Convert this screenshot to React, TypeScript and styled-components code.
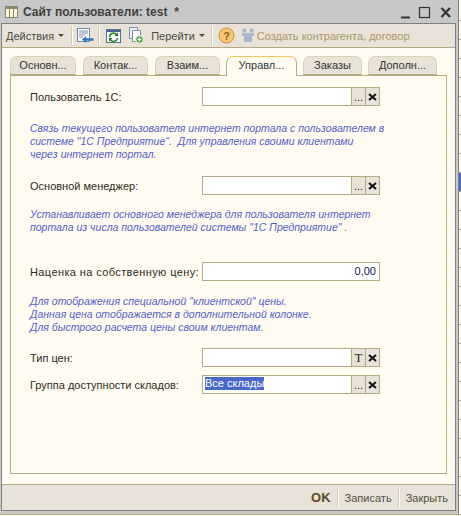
import React from 'react';
import styled, { createGlobalStyle } from 'styled-components';

const colors = {
  paper: '#fffbf0',
  chrome: '#e8e2d8',
  tan: '#b5ab82',
  frame: '#c8c8c8',
  edge: '#7f7f7f',
  note: '#5560c6',
  ink: '#3c3c3c',
  selection: '#4a68c8',
};

const GlobalStyle = createGlobalStyle`
  html, body {
    margin: 0;
    padding: 0;
    background: ${colors.paper};
  }
  body {
    font-family: "Liberation Sans", Arial, sans-serif;
    font-size: 11px;
  }
`;

const Page = styled.div`
  width: 461px;
  height: 516px;
  overflow: hidden;
  display: flex;
  flex-direction: column;
`;

const TopRow = styled.div`
  display: flex;
  height: 514px;
`;

const BottomStrip = styled.div`
  height: 2px;
  border-top: 1px solid ${colors.tan};
  background: ${colors.paper};
`;

const Frame = styled.div`
  width: 459px;
  box-sizing: border-box;
  background: ${colors.frame};
  padding: 0 2px 3px 1px;
  display: flex;
  flex-direction: column;
  border-right: 1px solid ${colors.edge};
`;

const TitleBar = styled.div`
  height: 23px;
  flex-shrink: 0;
  display: flex;
  align-items: center;
  padding-left: 4px;
  gap: 5px;
`;

const TitleText = styled.span`
  font-size: 12px;
  font-weight: bold;
  color: #404040;
  white-space: pre;
  flex: 1;
`;

const WindowButtons = styled.div`
  display: flex;
  align-items: center;
  margin-right: 5px;
`;

const Inner = styled.div`
  flex: 1;
  min-height: 0;
  display: flex;
  flex-direction: column;
  background: ${colors.paper};
  border: 1px solid ${colors.edge};
`;

const Toolbar = styled.div`
  height: 23px;
  flex-shrink: 0;
  background: ${colors.chrome};
  border-bottom: 1px solid ${colors.tan};
  display: flex;
  align-items: center;
  padding-left: 4px;
`;

const ToolText = styled.span<{ $muted?: boolean }>`
  font-size: 11px;
  color: ${(p) => (p.$muted ? '#a8986a' : '#4a4a42')};
  white-space: nowrap;
`;

const ToolArrow = styled.span`
  width: 0;
  height: 0;
  margin-left: 4px;
  border-left: 3px solid transparent;
  border-right: 3px solid transparent;
  border-top: 3px solid #5a4a20;
`;

const ToolDivider = styled.span<{ $left: number; $right: number }>`
  width: 1px;
  height: 19px;
  background: #d0c8b0;
  box-shadow: 1px 0 0 #fffdf6;
  margin-left: ${(p) => p.$left}px;
  margin-right: ${(p) => p.$right}px;
`;

const ToolIcon = styled.svg<{ $gap?: number }>`
  flex-shrink: 0;
  margin-right: ${(p) => p.$gap ?? 0}px;
`;

const Body = styled.div`
  flex: 1;
  min-height: 0;
  padding: 8px 9px 10px 8px;
  display: flex;
  flex-direction: column;
`;

const TabStrip = styled.div`
  display: flex;
  height: 20px;
  flex-shrink: 0;
  position: relative;
  z-index: 1;
`;

const Tab = styled.div<{ $width: number; $gap: number; $active?: boolean }>`
  width: ${(p) => p.$width}px;
  margin-right: ${(p) => p.$gap}px;
  box-sizing: border-box;
  height: ${(p) => (p.$active ? 20 : 19)}px;
  background: ${(p) => (p.$active ? colors.paper : colors.chrome)};
  border: 1px solid ${(p) => (p.$active ? colors.tan : '#d8d2b8')};
  border-top-color: ${(p) => (p.$active ? '#f0c860' : '#d8d2b8')};
  border-bottom: ${(p) => (p.$active ? 'none' : `1px solid ${colors.tan}`)};
  border-radius: 7px 7px 0 0;
  text-align: center;
  line-height: 17px;
  font-size: 11px;
  color: #333330;
  white-space: nowrap;
  overflow: hidden;
`;

const Panel = styled.div`
  flex: 1;
  min-height: 0;
  width: 437px;
  box-sizing: border-box;
  border: 1px solid ${colors.tan};
  margin-top: -1px;
  padding: 11px 0 0 19px;
`;

const Row = styled.div<{ $top?: number }>`
  display: grid;
  grid-template-columns: 172px 178px;
  align-items: center;
  height: 19px;
  margin-top: ${(p) => p.$top ?? 0}px;
`;

const Label = styled.span<{ $spread?: number }>`
  font-size: 11px;
  letter-spacing: ${(p) => p.$spread ?? 0}px;
  color: #2c2c20;
  white-space: nowrap;
`;

const Field = styled.div`
  height: 19px;
  box-sizing: border-box;
  border: 1px solid ${colors.tan};
  background: #fff;
  display: flex;
  align-items: stretch;
`;

const FieldValue = styled.div<{ $right?: boolean }>`
  flex: 1;
  min-width: 0;
  padding: 0 3px 0 2px;
  font-size: 11px;
  line-height: 17px;
  color: #10204a;
  text-align: ${(p) => (p.$right ? 'right' : 'left')};
`;

const Selected = styled.span`
  background: ${colors.selection};
  color: #fff;
  display: inline-block;
  height: 13px;
  line-height: 13px;
  vertical-align: 1px;
`;

const FieldButton = styled.div`
  width: 14px;
  box-sizing: border-box;
  background: ${colors.chrome};
  border-left: 1px solid ${colors.tan};
  display: flex;
  align-items: center;
  justify-content: center;
  color: #111;
`;

const Dots = styled.span`
  font-size: 11px;
  line-height: 11px;
  padding-top: 1px;
  color: #111;
`;

const TypeGlyph = styled.span`
  font-family: "Liberation Serif", serif;
  font-size: 13px;
  color: #222;
`;

const Note = styled.div<{ $top: number }>`
  margin-top: ${(p) => p.$top}px;
  font-size: 10.5px;
  font-style: italic;
  line-height: 13px;
  color: ${colors.note};
  white-space: pre;
`;

const Footer = styled.div`
  height: 25px;
  flex-shrink: 0;
  background: ${colors.chrome};
  border-top: 1px solid ${colors.tan};
  display: flex;
  align-items: center;
  justify-content: flex-end;
  padding-right: 7px;
`;

const FooterLink = styled.span<{ $strong?: boolean }>`
  font-size: ${(p) => (p.$strong ? 13 : 11)}px;
  font-weight: ${(p) => (p.$strong ? 'bold' : 'normal')};
  color: ${(p) => (p.$strong ? '#5a4a1e' : '#55503c')};
`;

const FooterDivider = styled.span`
  width: 1px;
  height: 18px;
  background: #d0c8b0;
  box-shadow: 1px 0 0 #fffdf6;
  margin: 0 7px 0 6px;
`;

const Backdrop = styled.div`
  flex: 1;
  display: flex;
  flex-direction: column;
  padding-top: 2px;
`;

const BackdropCell = styled.div<{ $active?: boolean }>`
  height: 18px;
  flex-shrink: 0;
  border-bottom: 1px solid ${colors.tan};
  background: ${(p) => (p.$active ? colors.selection : colors.paper)};
`;

const close = (
  <FieldButton>
    <svg width="9" height="8" viewBox="0 0 9 8">
      <path d="M1 1l7 6M8 1L1 7" stroke="#111" strokeWidth="2" fill="none" />
    </svg>
  </FieldButton>
);

const dots = (
  <FieldButton>
    <Dots>...</Dots>
  </FieldButton>
);

const tabs = [
  { label: 'Основн...', width: 66, gap: 7 },
  { label: 'Контак...', width: 65, gap: 7 },
  { label: 'Взаим...', width: 65, gap: 6 },
  { label: 'Управл...', width: 71, gap: 6, active: true },
  { label: 'Заказы', width: 59, gap: 6 },
  { label: 'Дополн...', width: 69, gap: 0 },
];

const App: React.FC = () => (
  <Page>
    <GlobalStyle />
    <TopRow>
      <Frame>
        <TitleBar>
          <svg width="13" height="12" viewBox="0 0 13 12">
            <rect x="0.5" y="0.5" width="12" height="11" fill="#fffbe0" stroke="#8a8460" />
            <rect x="0.5" y="0.5" width="12" height="2.5" fill="#8a8a70" />
            <path d="M4.5 3v8M8.5 3v8" stroke="#8a8460" />
          </svg>
          <TitleText>Сайт пользователи: test  *</TitleText>
          <WindowButtons>
            <svg width="50" height="14" viewBox="0 0 50 14">
              <path d="M0 12.5h9" stroke="#333" strokeWidth="2" />
              <rect x="18.5" y="2.5" width="10" height="10" fill="none" stroke="#333" strokeWidth="1.2" />
              <path d="M40.5 3l8.5 9M49 3l-8.5 9" stroke="#333" strokeWidth="2.2" />
            </svg>
          </WindowButtons>
        </TitleBar>
        <Inner>
          <Toolbar>
            <ToolText>Действия</ToolText>
            <ToolArrow />
            <ToolDivider $left={7} $right={5} />
            <ToolIcon width="17" height="16" viewBox="0 0 17 16">
              <rect x="0.5" y="0.5" width="12" height="13" fill="#fff" stroke="#7088a8" />
              <path d="M2 3h9M2 5h9M2 7h6M2 9h4" stroke="#8090a8" />
              <path d="M16.5 11.5H8" stroke="#2878c0" strokeWidth="2.4" />
              <path d="M5 11.5l4-3.5v7z" fill="#2878c0" />
            </ToolIcon>
            <ToolDivider $left={4} $right={7} />
            <ToolIcon width="15" height="14" viewBox="0 0 15 14" $gap={8}>
              <rect x="0.5" y="0.5" width="14" height="13" fill="#fff" stroke="#5a7088" />
              <rect x="1" y="1" width="13" height="2" fill="#4a6a90" />
              <path d="M3.5 8a4 4 0 0 1 7-2.5M11.5 9a4 4 0 0 1-7 2" fill="none" stroke="#2f8a30" strokeWidth="1.6" />
              <path d="M12 3.5v3.5H8.5zM3 12.5V9h3.5z" fill="#1f6a20" />
            </ToolIcon>
            <ToolIcon width="15" height="17" viewBox="0 0 15 17" $gap={7}>
              <rect x="0.5" y="0.5" width="8" height="11" fill="#eef2f8" stroke="#8090a8" />
              <rect x="3.5" y="3.5" width="8" height="11" fill="#fff" stroke="#8090a8" />
              <circle cx="10.5" cy="12.5" r="4" fill="#5cae50" stroke="#fff" />
              <path d="M8.5 12.5h4M10.5 10.5v4" stroke="#fff" />
            </ToolIcon>
            <ToolText>Перейти</ToolText>
            <ToolArrow />
            <ToolDivider $left={6} $right={6} />
            <ToolIcon width="17" height="17" viewBox="0 0 17 17" $gap={6}>
              <circle cx="8.5" cy="8.5" r="7.5" fill="#f8c878" stroke="#c88a30" />
              <text x="8.5" y="12.5" textAnchor="middle" fontSize="11" fontWeight="bold" fontFamily="Liberation Sans" fill="#8a5a18">?</text>
            </ToolIcon>
            <ToolIcon width="14" height="15" viewBox="0 0 14 15" $gap={2}>
              <circle cx="3.5" cy="2.5" r="2" fill="#a8b4c4" />
              <circle cx="10.5" cy="2.5" r="2" fill="#a8b4c4" />
              <path d="M1 5h12v3h-2v6H3V8H1z" fill="#a8b8cc" />
            </ToolIcon>
            <ToolText $muted>Создать контрагента, договор</ToolText>
          </Toolbar>
          <Body>
            <TabStrip>
              {tabs.map((tab) => (
                <Tab key={tab.label} $width={tab.width} $gap={tab.gap} $active={tab.active}>
                  {tab.label}
                </Tab>
              ))}
            </TabStrip>
            <Panel>
              <Row>
                <Label>Пользователь 1С:</Label>
                <Field>
                  <FieldValue />
                  {dots}
                  {close}
                </Field>
              </Row>
              <Note $top={16}>
                {'Связь текущего пользователя интернет портала с пользователем в\nсистеме "1С Предприятие".  Для управления своими клиентами\nчерез интернет портал.'}
              </Note>
              <Row $top={15}>
                <Label>Основной менеджер:</Label>
                <Field>
                  <FieldValue />
                  {dots}
                  {close}
                </Field>
              </Row>
              <Note $top={13}>
                {'Устанавливает основного менеджера для пользователя интернет\nпортала из числа пользователей системы "1С Предприятие" .'}
              </Note>
              <Row $top={28}>
                <Label $spread={0.39}>Наценка на собственную цену:</Label>
                <Field>
                  <FieldValue $right>0,00</FieldValue>
                </Field>
              </Row>
              <Note $top={14}>
                {'Для отображения специальной "клиентской" цены.\nДанная цена отображается в дополнительной колонке.\nДля быстрого расчета цены своим клиентам.'}
              </Note>
              <Row $top={14}>
                <Label>Тип цен:</Label>
                <Field>
                  <FieldValue />
                  <FieldButton>
                    <TypeGlyph>T</TypeGlyph>
                  </FieldButton>
                  {close}
                </Field>
              </Row>
              <Row $top={8}>
                <Label>Группа доступности складов:</Label>
                <Field>
                  <FieldValue>
                    <Selected>Все склады</Selected>
                  </FieldValue>
                  {dots}
                  {close}
                </Field>
              </Row>
            </Panel>
          </Body>
          <Footer>
            <FooterLink $strong>OK</FooterLink>
            <FooterDivider />
            <FooterLink>Записать</FooterLink>
            <FooterDivider />
            <FooterLink>Закрыть</FooterLink>
          </Footer>
        </Inner>
      </Frame>
      <Backdrop>
        {Array.from({ length: 27 }, (_, i) => (
          <BackdropCell key={i} $active={i === 9} />
        ))}
      </Backdrop>
    </TopRow>
    <BottomStrip />
  </Page>
);

export default App;
